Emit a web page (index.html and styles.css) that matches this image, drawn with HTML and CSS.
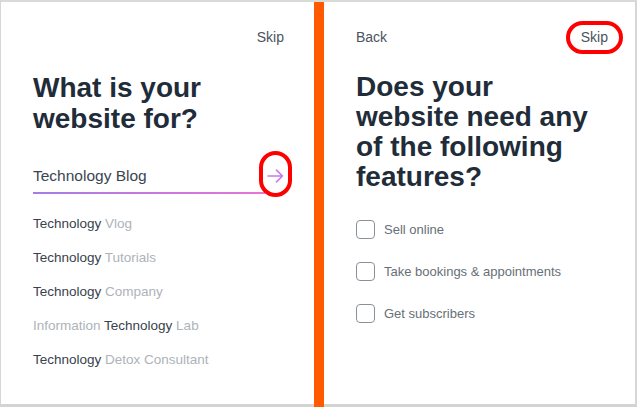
FILE: index.html
```html
<!DOCTYPE html>
<html>
<head>
<meta charset="utf-8">
<link rel="stylesheet" href="styles.css">
</head>
<body>
<div class="frame">
  <section class="panel left">
    <div class="topbar end"><span class="link">Skip</span></div>
    <h1 class="title t-left">What is your<br>website for?</h1>
    <div class="field-row">
      <div class="field">
        <div class="value">Technology Blog</div>
        <div class="underline"></div>
      </div>
      <div class="arrow">
        <svg width="17" height="14" viewBox="0 0 17 14"><path d="M1 7 H15.5 M9.5 1.2 L15.5 7 L9.5 12.8" fill="none" stroke="#c67be6" stroke-width="1.6" stroke-linecap="round" stroke-linejoin="round"/></svg>
      </div>
    </div>
    <ul class="suggestions">
      <li><b>Technology</b> Vlog</li>
      <li><b>Technology</b> Tutorials</li>
      <li><b>Technology</b> Company</li>
      <li>Information <b>Technology</b> Lab</li>
      <li><b>Technology</b> Detox Consultant</li>
    </ul>
  </section>
  <div class="divider"></div>
  <section class="panel right">
    <div class="topbar between"><span class="link">Back</span><span class="link">Skip</span></div>
    <h1 class="title t-right">Does your<br>website need any<br>of the following<br>features?</h1>
    <ul class="features">
      <li><span class="box"></span>Sell online</li>
      <li><span class="box"></span>Take bookings &amp; appointments</li>
      <li><span class="box"></span>Get subscribers</li>
    </ul>
  </section>
  <div class="mark mark-arrow"></div>
  <div class="mark mark-skip"></div>
</div>
</body>
</html>
```

FILE: styles.css
```css
* { box-sizing: border-box; }
html, body { margin: 0; padding: 0; background: #ffffff; }
body {
  width: 637px;
  height: 407px;
  overflow: hidden;
  font-family: "Liberation Sans", Arial, sans-serif;
}
.frame {
  position: relative;
  width: 637px;
  height: 407px;
  display: flex;
  border-top: 2px solid #dadada;
  border-left: 1px solid #d6d6d6;
  border-right: 2px solid #d6d6d6;
  border-bottom: 3px solid #d3d3d3;
  background: #fff;
}
.panel {
  padding-top: 25px;
  padding-left: 32px;
}
.left { width: 313px; padding-right: 30px; }
.right { flex: 1; padding-right: 27px; }
.divider {
  width: 10px;
  background: #ff5a00;
  margin-bottom: -3px;
}
.topbar {
  display: flex;
  height: 20px;
  line-height: 20px;
}
.end { justify-content: flex-end; }
.between { justify-content: space-between; }
.link {
  font-size: 14px;
  color: #4b535c;
}
.title {
  margin: 25px 0 0 0;
  font-size: 28px;
  font-weight: bold;
  color: #1f2c39;
}
.t-left { line-height: 31px; }
.t-right { line-height: 30px; }
.field-row {
  display: flex;
  align-items: flex-start;
  margin-top: 32px;
}
.field { width: 232px; }
.value {
  font-size: 15.5px;
  line-height: 20px;
  color: #3b4552;
  height: 20px;
}
.underline {
  margin-top: 6px;
  height: 2px;
  background: linear-gradient(90deg, #a47ce8, #e874d6);
}
.arrow {
  margin-left: 2px;
  margin-top: 3px;
  height: 14px;
}
.arrow svg { display: block; }
.suggestions {
  list-style: none;
  margin: 20px 0 0 0;
  padding: 0;
  display: flex;
  flex-direction: column;
  gap: 14px;
}
.suggestions li {
  font-size: 13.5px;
  line-height: 20px;
  color: #adb3b9;
  white-space: nowrap;
}
.suggestions b {
  font-weight: normal;
  color: #39424c;
}
.features {
  list-style: none;
  margin: 27px 0 0 0;
  padding: 0;
  display: flex;
  flex-direction: column;
  gap: 22px;
}
.features li {
  display: flex;
  align-items: center;
  height: 20px;
  font-size: 13px;
  color: #676f78;
  white-space: nowrap;
}
.box {
  width: 19px;
  height: 19px;
  border: 1.5px solid #8b9199;
  border-radius: 4px;
  margin-right: 9px;
  flex: none;
}
.mark {
  position: absolute;
  border: 4px solid #ff0000;
  border-radius: 17px;
}
.mark-arrow {
  left: 258px;
  top: 149px;
  width: 33px;
  height: 46px;
}
.mark-skip {
  left: 565px;
  top: 19px;
  width: 57px;
  height: 33px;
}
```
